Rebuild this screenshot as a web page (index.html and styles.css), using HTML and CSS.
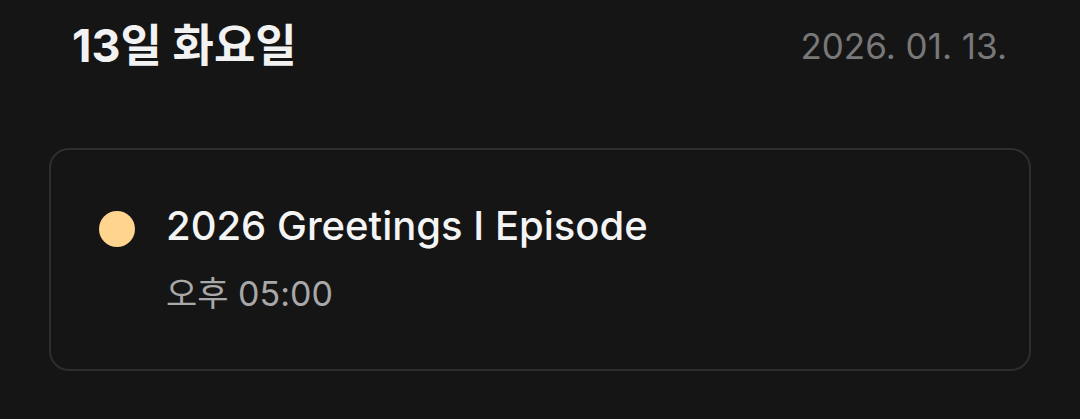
FILE: index.html
```html
<!DOCTYPE html>
<html lang="ko">
<head>
  <meta charset="UTF-8">
  <meta name="viewport" content="width=device-width, initial-scale=1">
  <title>일정</title>
  <link rel="stylesheet" href="styles.css">
</head>
<body>
  <div class="day">
    <div class="day-head">
      <h2 class="day-title">13일 화요일</h2>
      <span class="day-date">2026. 01. 13.</span>
    </div>

    <div class="event-card">
      <span class="event-dot"></span>
      <div class="event-body">
        <div class="event-title">2026 Greetings I Episode</div>
        <div class="event-time">오후 05:00</div>
      </div>
    </div>
  </div>
</body>
</html>
```

FILE: styles.css
```css
body {
  margin: 0;
  background: #151515;
  font-family: Inter, "Noto Sans CJK KR", sans-serif;
  color: #f2f2f2;
}
.day {
  padding: 14px 49px 0;
}
.day-head {
  display: flex;
  justify-content: space-between;
  align-items: center;
  padding: 0 24px 0 23px;
}
.day-title {
  margin: 0;
  font-size: 45px;
  line-height: 64px;
  font-weight: 700;
}
.day-date {
  font-size: 35px;
  color: #787878;
}
.event-card {
  margin-top: 70px;
  border: 2px solid #2e2e2e;
  border-radius: 20px;
  display: flex;
  align-items: flex-start;
  padding: 0 48px;
  box-sizing: border-box;
  height: 223px;
}
.event-dot {
  width: 36px;
  height: 36px;
  border-radius: 50%;
  background: #ffd48e;
  margin-top: 61px;
  flex-shrink: 0;
}
.event-body {
  margin-left: 31px;
  padding-top: 52px;
}
.event-title {
  font-size: 40px;
  line-height: 48px;
  font-weight: 500;
  color: #f4f4f4;
}
.event-time {
  margin-top: 22px;
  font-size: 34px;
  line-height: 44px;
  color: #a8a8a8;
}
```
